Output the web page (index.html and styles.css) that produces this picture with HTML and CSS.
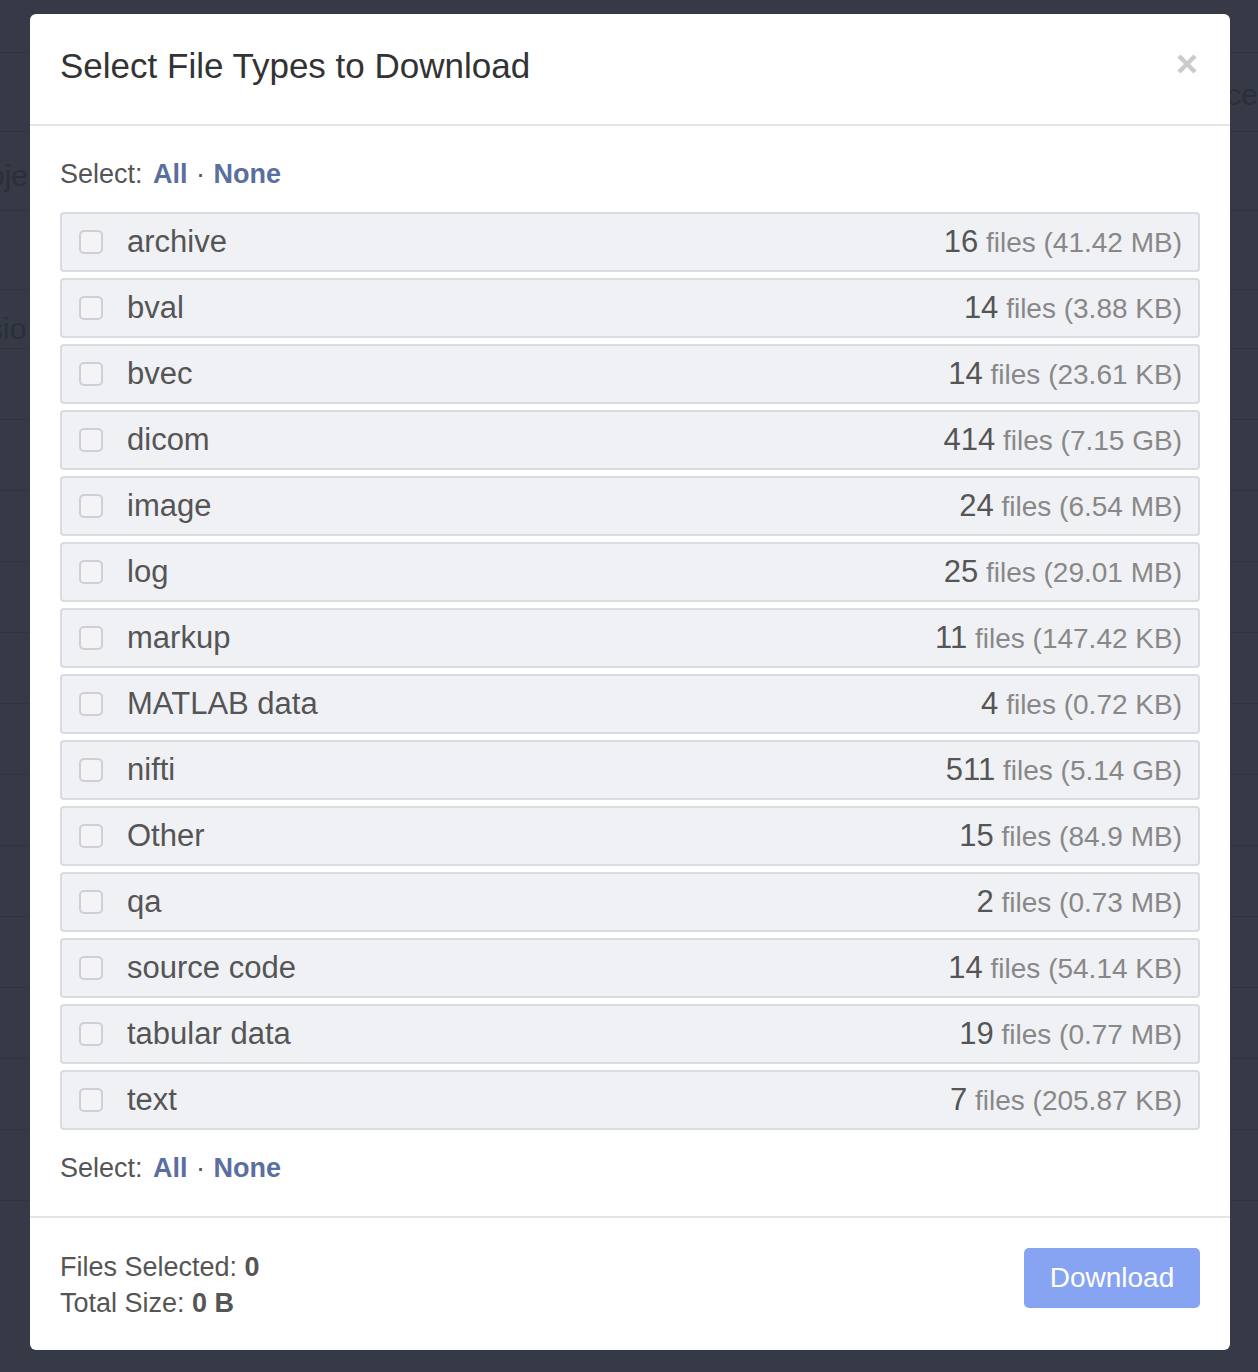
FILE: index.html
```html
<!DOCTYPE html>
<html>
<head>
<meta charset="UTF-8">
<title>Select File Types to Download</title>
<link rel="stylesheet" href="styles.css">
</head>
<body>
	<!-- page behind the dialog -->
	<div class="page">
		<div class="page-row page-row-a"><span class="ghost ghost-right">ce</span></div>
		<div class="page-row page-row-a"><span class="ghost">oje</span></div>
		<div class="page-row page-row-a"></div>
		<div class="page-row page-row-b"><span class="ghost ghost-low">sio</span></div>
		<div class="page-row"></div>
		<div class="page-row"></div>
		<div class="page-row"></div>
		<div class="page-row"></div>
		<div class="page-row"></div>
		<div class="page-row"></div>
		<div class="page-row"></div>
		<div class="page-row"></div>
		<div class="page-row"></div>
		<div class="page-row"></div>
		<div class="page-row"></div>
		<div class="page-row"></div>
		<div class="page-row"></div>
	</div>

	<div class="modal">
		<div class="modal-header">
			<h4 class="modal-title">Select File Types to Download</h4>
			<button class="close" type="button">
				<svg width="20" height="20" viewBox="0 0 20 20"><path d="M2 2 L18 18 M18 2 L2 18" stroke="#cbcbcb" stroke-width="4.4" stroke-linecap="butt"/></svg>
			</button>
		</div>
		<div class="modal-body">
			<p class="select-line">Select: <a href="#" class="first">All</a> <span class="dot">&middot;</span> <a href="#">None</a></p>
			<ul class="type-list">
				<li class="type-row"><span class="check"></span><span class="type-name">archive</span><span class="type-count"><b>16</b> files (41.42 MB)</span></li>
				<li class="type-row"><span class="check"></span><span class="type-name">bval</span><span class="type-count"><b>14</b> files (3.88 KB)</span></li>
				<li class="type-row"><span class="check"></span><span class="type-name">bvec</span><span class="type-count"><b>14</b> files (23.61 KB)</span></li>
				<li class="type-row"><span class="check"></span><span class="type-name">dicom</span><span class="type-count"><b>414</b> files (7.15 GB)</span></li>
				<li class="type-row"><span class="check"></span><span class="type-name">image</span><span class="type-count"><b>24</b> files (6.54 MB)</span></li>
				<li class="type-row"><span class="check"></span><span class="type-name">log</span><span class="type-count"><b>25</b> files (29.01 MB)</span></li>
				<li class="type-row"><span class="check"></span><span class="type-name">markup</span><span class="type-count"><b>11</b> files (147.42 KB)</span></li>
				<li class="type-row"><span class="check"></span><span class="type-name">MATLAB data</span><span class="type-count"><b>4</b> files (0.72 KB)</span></li>
				<li class="type-row"><span class="check"></span><span class="type-name">nifti</span><span class="type-count"><b>511</b> files (5.14 GB)</span></li>
				<li class="type-row"><span class="check"></span><span class="type-name">Other</span><span class="type-count"><b>15</b> files (84.9 MB)</span></li>
				<li class="type-row"><span class="check"></span><span class="type-name">qa</span><span class="type-count"><b>2</b> files (0.73 MB)</span></li>
				<li class="type-row"><span class="check"></span><span class="type-name">source code</span><span class="type-count"><b>14</b> files (54.14 KB)</span></li>
				<li class="type-row"><span class="check"></span><span class="type-name">tabular data</span><span class="type-count"><b>19</b> files (0.77 MB)</span></li>
				<li class="type-row"><span class="check"></span><span class="type-name">text</span><span class="type-count"><b>7</b> files (205.87 KB)</span></li>
			</ul>
			<p class="select-line select-bottom">Select: <a href="#" class="first">All</a> <span class="dot">&middot;</span> <a href="#">None</a></p>
		</div>
		<div class="modal-footer">
			<div class="summary">
				<div>Files Selected: <strong>0</strong></div>
				<div>Total Size: <strong>0 B</strong></div>
			</div>
			<button class="btn-download" type="button" disabled>Download</button>
		</div>
	</div>
</body>
</html>
```

FILE: styles.css
```css
/* base */
html, body {margin:0; padding:0;}
body {background:#363a46; font-family:"Liberation Sans", Arial, sans-serif; color:#555; height:1372px; overflow:hidden;}
ul, li {list-style:none; margin:0; padding:0;}
p, h4 {margin:0;}
a {text-decoration:none; color:#5a6f9f; font-weight:bold;}

/* page behind the overlay */
.page {display:flex; flex-direction:column; padding-top:52px;}
.page-row {height:70px; border-top:1px solid #30343f; position:relative;}
.page-row-a {height:78px;}
.page-row-b {height:58px;}
.ghost {position:absolute; left:-12px; top:27px; font-size:30px; color:#2b2f3a;}
.ghost-low {top:22px;}
.ghost-right {left:auto; right:0; top:25px;}

/* dialog */
.modal {position:absolute; top:14px; left:30px; width:1200px; height:1336px; background:#fff; border-radius:6px; display:flex; flex-direction:column;}
.modal-header {border-bottom:2px solid #e5e5e5; display:flex; align-items:center; justify-content:space-between; padding:0 30px; box-sizing:border-box; height:112px;}
.modal-title {font-size:35px; font-weight:normal; color:#333; padding-bottom:6px;}
.close {background:none; border:0; padding:0; margin:0 3px 10px 0; display:flex;}

.modal-body {padding:30px; border-bottom:2px solid #e5e5e5;}
.select-line {font-size:27px; line-height:36px; color:#555;}
.select-line .first {margin-left:3px;}
.select-line .dot {color:#555; padding:0 1px;}
.select-bottom {margin-top:20px;}

.type-list {display:flex; flex-direction:column; gap:6px; margin-top:20px;}
.type-row {height:60px; box-sizing:border-box; background:#f0f1f5; border:2px solid #d8dbe2; border-radius:4px; display:flex; align-items:center; padding:0 16px 0 17px;}
.check {width:20px; height:20px; border:2px solid #cfd0d3; border-radius:5px; background:#f4f4f6; flex:none;}
.type-name {font-size:31px; color:#555; margin-left:24px; flex:1;}
.type-count {font-size:28px; color:#888;}
.type-count b {font-size:31px; font-weight:normal; color:#555;}

.modal-footer {flex:1; display:flex; justify-content:space-between; align-items:flex-start; padding:30px 30px 0 30px;}
.summary {font-size:27px; line-height:36px; color:#555; padding-top:1px;}
.btn-download {width:176px; height:60px; background:#87a4f2; color:#fff; border:0; border-radius:5px; font-family:"Liberation Sans", Arial, sans-serif; font-size:28px;}
```
